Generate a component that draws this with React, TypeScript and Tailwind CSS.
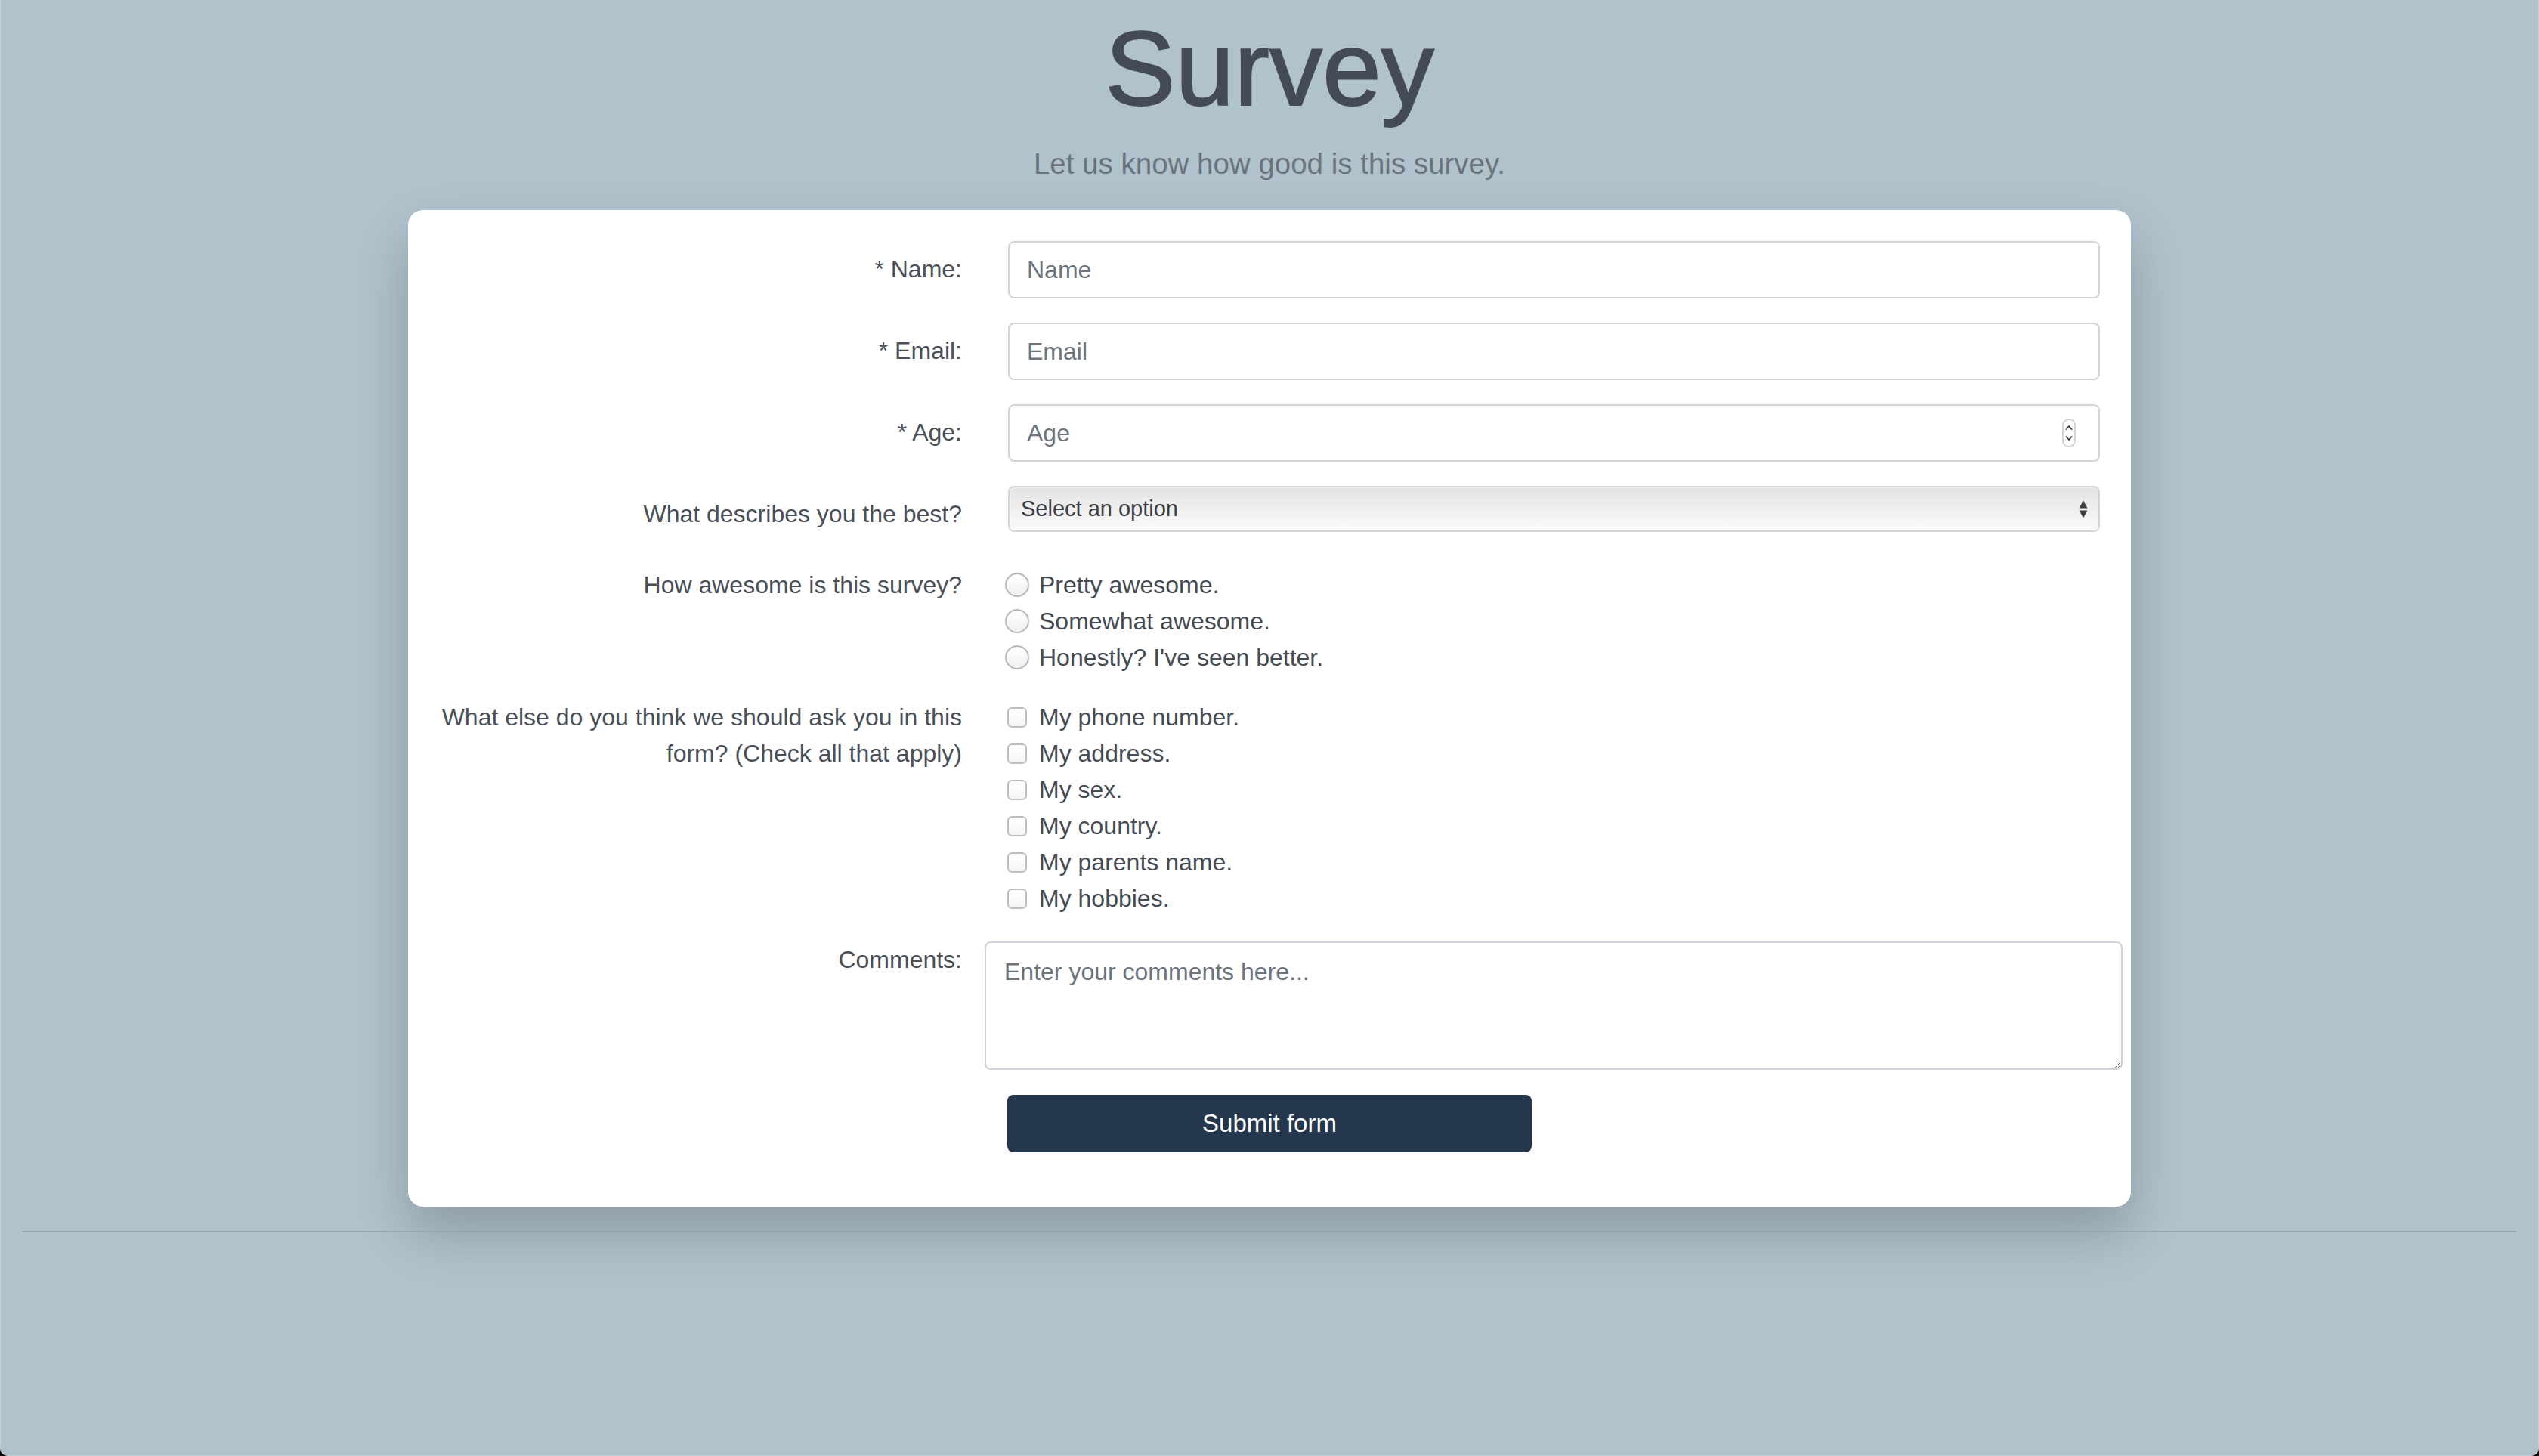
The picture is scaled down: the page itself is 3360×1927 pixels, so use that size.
import React from "react";

function Label({ children, extra }: { children: React.ReactNode; extra?: string }) {
  return (
    <div
      className={
        "w-[733px] shrink-0 pl-[30px] text-right text-[32px] leading-[48px] text-[#495057] " + (extra ?? "")
      }
    >
      {children}
    </div>
  );
}

function Row({ label, labelExtra, className, children }: { label: React.ReactNode; labelExtra?: string; className?: string; children: React.ReactNode }) {
  return (
    <div className={"flex " + (className ?? "")}>
      <Label extra={labelExtra}>{label}</Label>
      <div className="ml-[61px] w-[1445px]">{children}</div>
    </div>
  );
}

function TextInput({ placeholder }: { placeholder: string }) {
  return (
    <input
      type="text"
      placeholder={placeholder}
      className="block h-[76px] w-full rounded-[8px] border-2 border-[#ced4da] bg-white px-[23px] text-[32px] text-[#495057] outline-none placeholder:text-[#6c757d]"
    />
  );
}

function Spinner() {
  return (
    <svg width="18" height="38" viewBox="0 0 18 38" className="mr-[30px] shrink-0">
      <rect x="1" y="1" width="16" height="36" rx="8" fill="#ffffff" stroke="#c6c6c6" strokeWidth="1.5" />
      <path d="M5.5 14 L9 10 L12.5 14" fill="none" stroke="#3a3a3a" strokeWidth="1.8" strokeLinecap="round" strokeLinejoin="round" />
      <path d="M5.5 24 L9 28 L12.5 24" fill="none" stroke="#3a3a3a" strokeWidth="1.8" strokeLinecap="round" strokeLinejoin="round" />
    </svg>
  );
}

function SelectArrows() {
  return (
    <svg width="12" height="24" viewBox="0 0 12 24" className="mr-[14px] shrink-0">
      <path d="M0.5 10.5 L6 0.5 L11.5 10.5 Z" fill="#3d3d3d" />
      <path d="M0.5 13.5 L11.5 13.5 L6 23.5 Z" fill="#3d3d3d" />
    </svg>
  );
}

function Radio({ text }: { text: string }) {
  return (
    <label className="flex h-[48px] items-center">
      <span className="-ml-[4px] mr-[13px] block h-[32px] w-[32px] shrink-0 rounded-full border-2 border-[#b8b8b8] bg-linear-to-b from-[#ffffff] to-[#f1f1f1] shadow-[inset_0_1px_1px_rgba(0,0,0,0.05)]" />
      <span className="text-[32px] leading-[48px] text-[#454b53]">{text}</span>
    </label>
  );
}

function Check({ text }: { text: string }) {
  return (
    <label className="flex h-[48px] items-center">
      <span className="-ml-[1px] mr-[16px] block h-[27px] w-[26px] shrink-0 rounded-[6px] border-2 border-[#bdbdbd] bg-linear-to-b from-[#ffffff] to-[#f6f6f6]" />
      <span className="text-[32px] leading-[48px] text-[#454b53]">{text}</span>
    </label>
  );
}

export default function App() {
  return (
    <div className="min-h-[1927px] bg-black font-['Liberation_Sans',Arial,sans-serif]">
      <div className="flex min-h-[1927px] flex-col items-center rounded-b-[10px] border-x border-b border-[#c2cfd7] bg-[#b0c2cc]">
        <h1 className="mt-[6px] text-[140px] leading-[170px] text-[#454b54] [-webkit-text-stroke:2px_#454b54]">
          Survey
        </h1>
        <p className="mt-[12px] text-[38.5px] leading-[58px] text-[#6b747c]">
          Let us know how good is this survey.
        </p>

        <form className="mt-[32px] w-[2280px] rounded-[20px] bg-white pt-[41px] pb-[72px] shadow-[0_35px_70px_rgba(0,0,0,0.2)]">
          <Row label="* Name:" labelExtra="pt-[13px]" className="mb-[32px]">
            <TextInput placeholder="Name" />
          </Row>
          <Row label="* Email:" labelExtra="pt-[13px]" className="mb-[32px]">
            <TextInput placeholder="Email" />
          </Row>
          <Row label="* Age:" labelExtra="pt-[13px]" className="mb-[32px]">
            <div className="flex h-[76px] w-full items-center rounded-[8px] border-2 border-[#ced4da] bg-white">
              <input
                type="text"
                placeholder="Age"
                className="h-full min-w-0 flex-1 bg-transparent px-[23px] text-[32px] text-[#495057] outline-none placeholder:text-[#6c757d]"
              />
              <Spinner />
            </div>
          </Row>
          <Row label="What describes you the best?" labelExtra="pt-[13px]" className="mb-[31px] h-[76px]">
            <div className="flex h-[61px] w-full items-center justify-between rounded-[8px] border-2 border-[#d2d6da] bg-linear-to-b from-[#e3e3e3] to-[#fbfbfb] pl-[15px] shadow-[inset_1px_0_2px_rgba(255,255,255,0.9)]">
              <span className="text-[29px] text-[#3a3f45]">Select an option</span>
              <SelectArrows />
            </div>
          </Row>
          <Row label="How awesome is this survey?" className="mb-[31px]">
            <div className="flex flex-col">
              <Radio text="Pretty awesome." />
              <Radio text="Somewhat awesome." />
              <Radio text="Honestly? I've seen better." />
            </div>
          </Row>
          <Row label="What else do you think we should ask you in this form? (Check all that apply)" className="mb-[33px]">
            <div className="flex flex-col">
              <Check text="My phone number." />
              <Check text="My address." />
              <Check text="My sex." />
              <Check text="My country." />
              <Check text="My parents name." />
              <Check text="My hobbies." />
            </div>
          </Row>
          <Row label="Comments:" className="mb-[33px]">
            <textarea
              placeholder="Enter your comments here..."
              className="-ml-[31px] block h-[170px] w-[1506px] rounded-[8px] border-2 border-[#ced4da] bg-white px-[24px] py-[14px] text-[32px] leading-[48px] text-[#495057] outline-none placeholder:text-[#6c757d]"
            />
          </Row>
          <div className="flex">
            <div className="w-[733px] shrink-0" />
            <button
              type="button"
              className="ml-[60px] h-[76px] w-[694px] rounded-[8px] bg-[#25374d] text-[33px] text-white"
            >
              Submit form
            </button>
          </div>
        </form>

        <hr className="mt-[32px] w-[3300px] border-0 border-t-2 border-[#95a6b0]" />
      </div>
    </div>
  );
}
